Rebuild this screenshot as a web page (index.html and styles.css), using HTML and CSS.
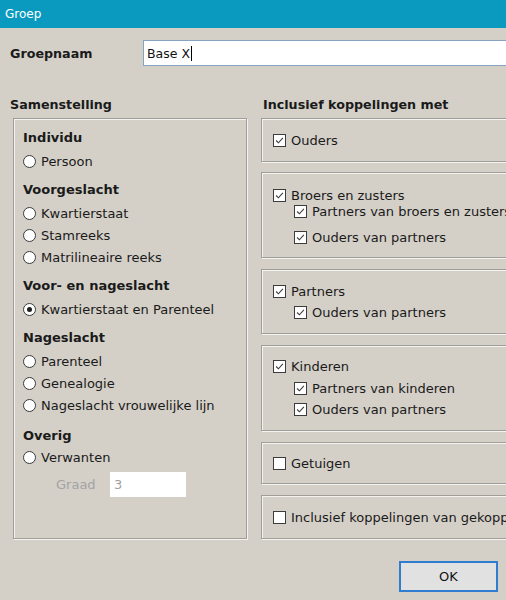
FILE: index.html
```html
<!DOCTYPE html>
<html>
<head>
<meta charset="utf-8">
<link rel="stylesheet" href="styles.css">
</head>
<body>
<div class="window">
  <div class="titlebar">Groep</div>
  <div class="name-row">
    <div class="name-label">Groepnaam</div>
    <div class="name-input">Base X<span class="caret"></span></div>
  </div>
  <div class="columns">
    <div class="col-left">
      <div class="section-title">Samenstelling</div>
      <div class="groupbox left-box">
        <div class="heading first">Individu</div>
        <div class="radio"><span class="dot"></span>Persoon</div>
        <div class="heading">Voorgeslacht</div>
        <div class="radio"><span class="dot"></span>Kwartierstaat</div>
        <div class="radio"><span class="dot"></span>Stamreeks</div>
        <div class="radio"><span class="dot"></span>Matrilineaire reeks</div>
        <div class="heading">Voor- en nageslacht</div>
        <div class="radio"><span class="dot on"></span>Kwartierstaat en Parenteel</div>
        <div class="heading">Nageslacht</div>
        <div class="radio"><span class="dot"></span>Parenteel</div>
        <div class="radio"><span class="dot"></span>Genealogie</div>
        <div class="radio"><span class="dot"></span>Nageslacht vrouwelijke lijn</div>
        <div class="heading h-overig">Overig</div>
        <div class="radio"><span class="dot"></span>Verwanten</div>
        <div class="graad-row">
          <span class="graad-label">Graad</span>
          <span class="graad-input">3</span>
        </div>
      </div>
    </div>
    <div class="col-right">
      <div class="section-title">Inclusief koppelingen met</div>
      <div class="groupbox rbox single b1">
        <div class="check"><span class="box"><svg viewBox="0 0 13 13"><path d="M2.5 6.5 L5.2 9.2 L10.5 3.5"/></svg></span>Ouders</div>
      </div>
      <div class="groupbox rbox b2">
        <div class="check"><span class="box"><svg viewBox="0 0 13 13"><path d="M2.5 6.5 L5.2 9.2 L10.5 3.5"/></svg></span>Broers en zusters</div>
        <div class="check sub"><span class="box"><svg viewBox="0 0 13 13"><path d="M2.5 6.5 L5.2 9.2 L10.5 3.5"/></svg></span>Partners van broers en zusters</div>
        <div class="check sub r3"><span class="box"><svg viewBox="0 0 13 13"><path d="M2.5 6.5 L5.2 9.2 L10.5 3.5"/></svg></span>Ouders van partners</div>
      </div>
      <div class="groupbox rbox b3">
        <div class="check"><span class="box"><svg viewBox="0 0 13 13"><path d="M2.5 6.5 L5.2 9.2 L10.5 3.5"/></svg></span>Partners</div>
        <div class="check sub gap5"><span class="box"><svg viewBox="0 0 13 13"><path d="M2.5 6.5 L5.2 9.2 L10.5 3.5"/></svg></span>Ouders van partners</div>
      </div>
      <div class="groupbox rbox b4">
        <div class="check"><span class="box"><svg viewBox="0 0 13 13"><path d="M2.5 6.5 L5.2 9.2 L10.5 3.5"/></svg></span>Kinderen</div>
        <div class="check sub gap6"><span class="box"><svg viewBox="0 0 13 13"><path d="M2.5 6.5 L5.2 9.2 L10.5 3.5"/></svg></span>Partners van kinderen</div>
        <div class="check sub gap5"><span class="box"><svg viewBox="0 0 13 13"><path d="M2.5 6.5 L5.2 9.2 L10.5 3.5"/></svg></span>Ouders van partners</div>
      </div>
      <div class="groupbox rbox single b5">
        <div class="check"><span class="box"></span>Getuigen</div>
      </div>
      <div class="groupbox rbox single b6">
        <div class="check"><span class="box"></span>Inclusief koppelingen van gekoppelde personen</div>
      </div>
    </div>
  </div>
  <div class="footer">
    <button class="ok">OK</button>
  </div>
</div>
</body>
</html>
```

FILE: styles.css
```css
html, body {
  margin: 0;
  padding: 0;
  background: #d4d0c8;
  overflow: hidden;
}

.window {
  width: 506px;
  height: 600px;
  overflow: hidden;
  background: #d4d0c8;
  font-family: "DejaVu Sans", Verdana, sans-serif;
  font-size: 13px;
  color: #1a1a1a;
}

.titlebar {
  height: 28px;
  line-height: 28px;
  background: #0a9ac0;
  color: #ffffff;
  padding-left: 5px;
  font-size: 12px;
}

.name-row {
  display: flex;
  align-items: center;
  margin-top: 12px;
  height: 26px;
}

.name-label {
  width: 143px;
  flex-shrink: 0;
  padding-left: 10px;
  box-sizing: border-box;
  font-weight: bold;
  font-size: 12.7px;
}

.name-input {
  width: 420px;
  flex-shrink: 0;
  height: 26px;
  box-sizing: border-box;
  background: #ffffff;
  border: 1px solid #86a4c2;
  padding-left: 3px;
  display: flex;
  align-items: center;
  color: #111;
  font-size: 12.5px;
}

.caret {
  display: inline-block;
  width: 1px;
  height: 15px;
  background: #000;
  margin-left: 1px;
}

.columns {
  display: flex;
  margin-top: 30px;
}

.col-left {
  width: 237px;
  padding-left: 10px;
  flex-shrink: 0;
}

.col-right {
  width: 320px;
  margin-left: 14px;
  flex-shrink: 0;
}

.section-title {
  height: 18px;
  line-height: 18px;
  font-weight: bold;
  font-size: 12.7px;
  margin-bottom: 4px;
}

.col-right .section-title {
  padding-left: 2px;
}

.groupbox {
  box-sizing: border-box;
  border: 1px solid #a09e99;
  box-shadow: inset 1px 1px 0 #f4f3ef, 1px 1px 0 #f4f3ef;
}

.left-box {
  margin-left: 3px;
  width: 234px;
  height: 421px;
  padding: 10px 0 0 9px;
}

.heading {
  height: 18px;
  line-height: 18px;
  font-weight: bold;
  font-size: 13px;
  margin-top: 9px;
}

.heading.first {
  margin-top: 0;
}

.heading.h-overig {
  margin-top: 11px;
}

.radio {
  display: flex;
  align-items: center;
  height: 22px;
  white-space: nowrap;
}

.heading + .radio {
  margin-top: 3px;
}

.h-overig + .radio {
  margin-top: 1px;
}

.dot {
  width: 13px;
  height: 13px;
  box-sizing: border-box;
  border: 1px solid #3a3a3a;
  border-radius: 50%;
  background: #ffffff;
  margin-right: 5px;
  display: flex;
  align-items: center;
  justify-content: center;
  flex-shrink: 0;
}

.dot.on::after {
  content: "";
  width: 5px;
  height: 5px;
  border-radius: 50%;
  background: #1e1e1e;
}

.graad-row {
  display: flex;
  align-items: center;
  margin-top: 4px;
  height: 25px;
  padding-left: 33px;
}

.graad-label {
  width: 54px;
  color: #a3a3a3;
}

.graad-input {
  width: 76px;
  height: 25px;
  box-sizing: border-box;
  background: #ffffff;
  color: #a0a0a0;
  padding-left: 4px;
  line-height: 25px;
}

.rbox {
  width: 320px;
  padding-left: 11px;
}

.rbox.single {
  display: flex;
  align-items: center;
}

.b1 { height: 44px; }
.b2 { height: 86px; margin-top: 10px; padding-top: 14px; }
.b3 { height: 65px; margin-top: 11px; padding-top: 13px; }
.b4 { height: 86px; margin-top: 11px; padding-top: 12px; }
.b5 { height: 42px; margin-top: 11px; }
.b6 { height: 44px; margin-top: 11px; }

.check {
  display: flex;
  align-items: center;
  height: 16px;
  white-space: nowrap;
}

.check.sub {
  padding-left: 21px;
}

.check.r3 { margin-top: 10px; }
.check.gap5 { margin-top: 5px; }
.check.gap6 { margin-top: 6px; }

.box {
  width: 13px;
  height: 13px;
  box-sizing: border-box;
  border: 1px solid #3c3c3c;
  background: #ffffff;
  margin-right: 5px;
  flex-shrink: 0;
  display: block;
}

.box svg {
  display: block;
  width: 11px;
  height: 11px;
}

.box path {
  fill: none;
  stroke: #3a3a3a;
  stroke-width: 1.3;
}

.footer {
  display: flex;
  justify-content: flex-end;
  padding-right: 8px;
  margin-top: 22px;
}

.ok {
  width: 99px;
  height: 31px;
  box-sizing: border-box;
  border: 2px solid #2f7cd0;
  background: #e1e1e1;
  font-family: "DejaVu Sans", Verdana, sans-serif;
  font-size: 13px;
  color: #111;
  padding: 0;
}
```
